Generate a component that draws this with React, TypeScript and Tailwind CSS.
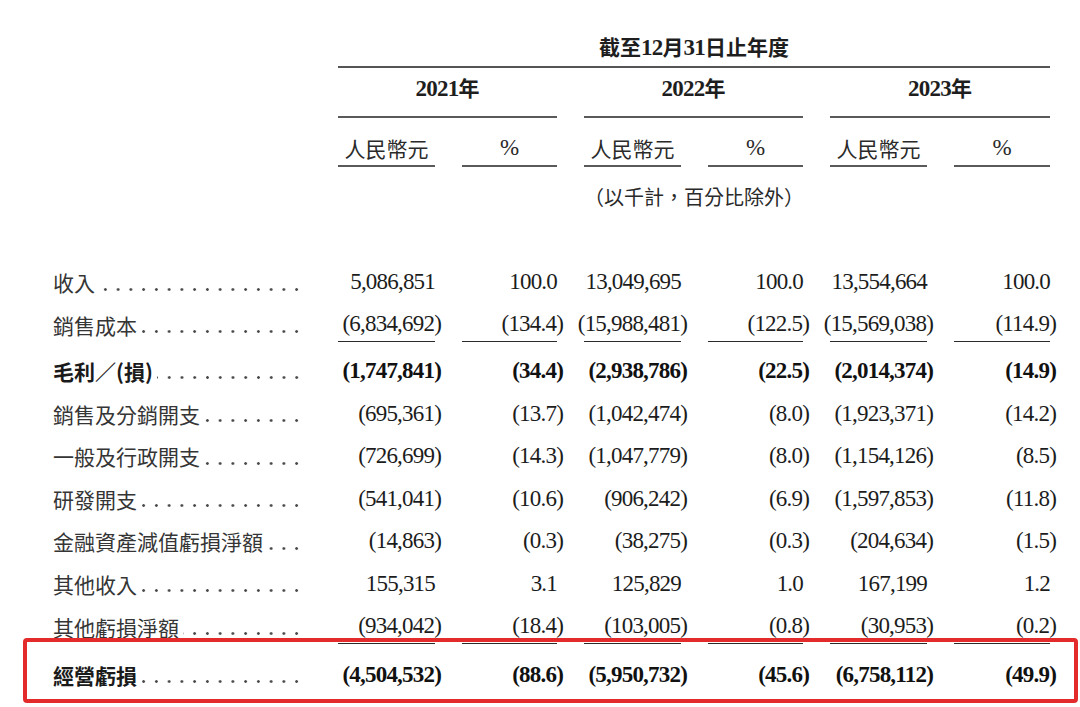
import React from "react";

type Row = {
  label: string;
  v: string[];
  bold?: boolean;
  underline?: boolean;
  gap?: "a" | "b";
};

const rows: Row[] = [
  { label: "收入", v: ["5,086,851", "100.0", "13,049,695", "100.0", "13,554,664", "100.0"] },
  { label: "銷售成本", underline: true, v: ["(6,834,692)", "(134.4)", "(15,988,481)", "(122.5)", "(15,569,038)", "(114.9)"] },
  { label: "毛利／(損)", bold: true, gap: "a", v: ["(1,747,841)", "(34.4)", "(2,938,786)", "(22.5)", "(2,014,374)", "(14.9)"] },
  { label: "銷售及分銷開支", v: ["(695,361)", "(13.7)", "(1,042,474)", "(8.0)", "(1,923,371)", "(14.2)"] },
  { label: "一般及行政開支", v: ["(726,699)", "(14.3)", "(1,047,779)", "(8.0)", "(1,154,126)", "(8.5)"] },
  { label: "研發開支", v: ["(541,041)", "(10.6)", "(906,242)", "(6.9)", "(1,597,853)", "(11.8)"] },
  { label: "金融資產減值虧損淨額", v: ["(14,863)", "(0.3)", "(38,275)", "(0.3)", "(204,634)", "(1.5)"] },
  { label: "其他收入", v: ["155,315", "3.1", "125,829", "1.0", "167,199", "1.2"] },
  { label: "其他虧損淨額", underline: true, v: ["(934,042)", "(18.4)", "(103,005)", "(0.8)", "(30,953)", "(0.2)"] },
  { label: "經營虧損", bold: true, gap: "b", v: ["(4,504,532)", "(88.6)", "(5,950,732)", "(45.6)", "(6,758,112)", "(49.9)"] },
];

const GRID = "grid grid-cols-[258px_97px_95px_97px_95px_97px_96px] gap-x-[27px]";

function Num({ v, bold, underline }: { v: string; bold?: boolean; underline?: boolean }) {
  const neg = v.startsWith("(");
  return (
    <div
      className={
        "h-[34px] flex items-center justify-end font-['Liberation_Serif',serif] text-[23px] leading-[28px] tracking-[-0.8px] " +
        (bold ? "font-bold text-[#111111] " : "text-[#1c1c1c] ") +
        (underline ? "border-b border-[#2a2a2a]" : "")
      }
    >
      <span className={neg ? "-mr-[6px]" : ""}>{v}</span>
    </div>
  );
}

function DataRow({ r }: { r: Row }) {
  return (
    <div
      className={
        GRID +
        " items-center h-[42.6px] " +
        (r.gap === "a" ? "mt-[3.5px]" : r.gap === "b" ? "mt-[5.5px]" : "")
      }
    >
      <div className="flex items-center h-full min-w-0">
        <span
          className={
            "whitespace-nowrap font-['Noto_Sans_CJK_TC',sans-serif] text-[21px] leading-[28px] " +
            (r.bold ? "font-bold text-[#1a1a1a]" : "text-[#353535]")
          }
        >
          {r.label}
        </span>
        <div className="flex-1 h-[3px] mt-[14px] ml-[4px] mr-[8px] bg-[radial-gradient(circle,#4a4a4a_1.1px,transparent_1.6px)] bg-[length:12.75px_3px] bg-repeat-x bg-right" />
      </div>
      {r.v.map((v, i) => (
        <Num key={i} v={v} bold={r.bold} underline={r.underline} />
      ))}
    </div>
  );
}

export default function App() {
  const serifCjk = "font-['Liberation_Serif','Noto_Sans_CJK_TC',serif]";
  return (
    <div className="relative w-[1080px] h-[707px] overflow-hidden bg-white">
      <div className="pl-[53px]">
        {/* Title */}
        <div className={GRID}>
          <div />
          <div
            className={
              "col-span-6 h-[68px] flex items-end justify-center pb-[4px] border-b-2 border-[#555555] font-bold text-[#1e1e1e] text-[21px] leading-[28px] " +
              serifCjk
            }
          >
            <span>
              截至<span className="text-[23px] tracking-[-0.8px]">12</span>月
              <span className="text-[23px] tracking-[-0.8px]">31</span>日止年度
            </span>
          </div>
        </div>

        {/* Years */}
        <div className={GRID}>
          <div />
          {["2021", "2022", "2023"].map((y) => (
            <div
              key={y}
              className={
                "col-span-2 h-[50px] pb-[6px] flex items-center justify-center border-b-2 border-[#5a5a5a] font-bold text-[#1e1e1e] text-[21px] leading-[28px] " +
                serifCjk
              }
            >
              <span>
                <span className="text-[23px] tracking-[-0.8px]">{y}</span>年
              </span>
            </div>
          ))}
        </div>

        {/* Sub headers */}
        <div className={GRID}>
          <div />
          {[0, 1, 2].map((i) => (
            <React.Fragment key={i}>
              <div className="h-[49px] pt-[13px] flex items-center justify-center border-b-2 border-[#5a5a5a] font-['Noto_Sans_CJK_TC',sans-serif] text-[21px] leading-[28px] text-[#2a2a2a]">
                人民幣元
              </div>
              <div className="h-[49px] pt-[13px] flex items-center justify-center border-b-2 border-[#5a5a5a] font-['Liberation_Serif',serif] text-[23px] leading-[28px] text-[#2a2a2a]">
                %
              </div>
            </React.Fragment>
          ))}
        </div>

        {/* Note */}
        <div className={GRID}>
          <div />
          <div className="col-span-6 h-[94px] pt-[12px] flex justify-center font-['Noto_Sans_CJK_TC',sans-serif] text-[20px] leading-[36px] text-[#2a2a2a]">
            （以千計，百分比除外）
          </div>
        </div>

        {/* Data rows */}
        {rows.map((r) => (
          <DataRow key={r.label} r={r} />
        ))}
      </div>

      {/* Red highlight annotation */}
      <div className="absolute left-[23px] top-[638px] w-[1055px] h-[65px] border-4 border-[#e32b2b] rounded-[4px] pointer-events-none" />
    </div>
  );
}
